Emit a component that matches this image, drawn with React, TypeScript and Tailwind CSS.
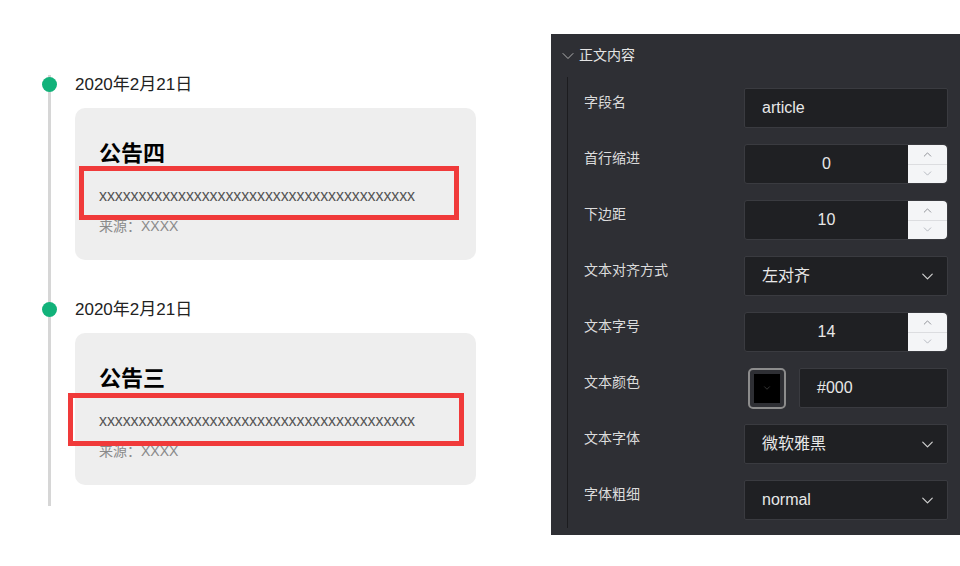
import { ChevronDown, ChevronUp } from "lucide-react";

const FONT = "font-['Liberation_Sans','Noto_Sans_CJK_SC',sans-serif]";

const XS = "x".repeat(40);

interface NoticeProps {
  title: string;
  box: string;
}

function Notice({ title, box }: NoticeProps) {
  return (
    <div className="relative mb-[40px] last:mb-0">
      {/* timeline dot */}
      <div className="absolute -left-[9px] top-[2px] h-[15px] w-[15px] rounded-full bg-[#12b27a]" />
      <div className="pl-[24px]">
        <div className="h-[20px] text-[17px] leading-[20px] text-[#222]">2020年2月21日</div>
        <div className="relative mt-[13px] h-[152px] w-[401px] rounded-[10px] bg-[#eeeeee] pl-[24px] pt-[31px]">
          <div className="text-[22px] font-bold leading-[30px] text-black">{title}</div>
          <div className="mt-[16px] text-[16px] leading-[22px] tracking-[-0.1px] text-[#555]">{XS}</div>
          <div className="mt-[9px] text-[14px] leading-[20px] text-[#8a8a8a]">来源：XXXX</div>
          {/* annotation box */}
          <div className={`absolute border-[5px] border-[#f03a3a] ${box}`} />
        </div>
      </div>
    </div>
  );
}

function Stepper() {
  return (
    <div className="flex w-[39px] flex-col rounded-r-[4px] bg-[#f4f5f7]">
      <div className="flex flex-1 items-center justify-center border-b border-[#dcdde0]">
        <ChevronUp size={13} strokeWidth={1.5} className="text-[#7d7f85]" />
      </div>
      <div className="flex flex-1 items-center justify-center">
        <ChevronDown size={13} strokeWidth={1.5} className="text-[#a9adb5]" />
      </div>
    </div>
  );
}

function TextBox({ value }: { value: string }) {
  return (
    <div className="flex h-[40px] w-[204px] items-center rounded-[2px] border border-[#3a3b40] bg-[#1f2023] pl-[17px] text-[16px] text-[#e8e8e8]">
      {value}
    </div>
  );
}

function NumberBox({ value }: { value: string }) {
  return (
    <div className="flex h-[40px] w-[204px] rounded-[3px] border border-[#3a3b40] bg-[#1f2023]">
      <div className="flex flex-1 items-center justify-center text-[16px] text-[#e8e8e8]">{value}</div>
      <Stepper />
    </div>
  );
}

function SelectBox({ value }: { value: string }) {
  return (
    <div className="flex h-[40px] w-[204px] items-center justify-between rounded-[2px] border border-[#3a3b40] bg-[#1f2023] pl-[17px] pr-[10px] text-[16px] text-[#e8e8e8]">
      <span>{value}</span>
      <ChevronDown size={19} strokeWidth={1.5} className="text-[#d0d0d0]" />
    </div>
  );
}

function ColorBox() {
  return (
    <div className="flex h-[40px] w-[204px] items-center gap-[13px] pl-[4px]">
      <div className="flex h-[41px] w-[38px] items-center justify-center rounded-[5px] border-2 border-[#8c8c8c] p-[4px]">
        <div className="flex h-full w-full items-center justify-center bg-black">
          <ChevronDown size={10} strokeWidth={1.5} className="text-[#555]" />
        </div>
      </div>
      <div className="flex h-[40px] flex-1 items-center rounded-[2px] border border-[#3a3b40] bg-[#1f2023] pl-[17px] text-[16px] text-[#e8e8e8]">
        #000
      </div>
    </div>
  );
}

const rows: { label: string; control: React.ReactNode }[] = [
  { label: "字段名", control: <TextBox value="article" /> },
  { label: "首行缩进", control: <NumberBox value="0" /> },
  { label: "下边距", control: <NumberBox value="10" /> },
  { label: "文本对齐方式", control: <SelectBox value="左对齐" /> },
  { label: "文本字号", control: <NumberBox value="14" /> },
  { label: "文本颜色", control: <ColorBox /> },
  { label: "文本字体", control: <SelectBox value="微软雅黑" /> },
  { label: "字体粗细", control: <SelectBox value="normal" /> },
];

export default function App() {
  return (
    <div className={`flex h-[566px] w-[960px] bg-white ${FONT}`}>
      {/* Left: timeline preview */}
      <div className="w-[551px] pl-[48px] pt-[77px]">
        <div className="h-[431px] border-l-[3px] border-[#d6d6d6]">
          <div className="-mt-[2px]">
            <Notice title="公告四" box="left-[4px] top-[58px] h-[54px] w-[380px]" />
            <Notice title="公告三" box="-left-[7px] top-[60px] h-[53px] w-[396px]" />
          </div>
        </div>
      </div>

      {/* Right: property panel */}
      <div className="mt-[34px] flex h-[501px] flex-1 flex-col bg-[#2e2f34]">
        <div className="flex h-[43px] items-center pl-[7px]">
          <ChevronDown size={20} strokeWidth={1.1} className="text-[#bbbbbb]" />
          <span className="ml-[1px] text-[14px] text-[#e4e4e4]">正文内容</span>
        </div>
        <div className="ml-[16px] flex flex-col gap-[16px] border-l border-[#1c1c1f] pb-[8px] pl-[16px] pt-[11px]">
          {rows.map((r) => (
            <div key={r.label} className="flex h-[40px]">
              <div className="w-[160px] pt-[4px] text-[14px] leading-[20px] text-[#dcdcdc]">{r.label}</div>
              {r.control}
            </div>
          ))}
        </div>
      </div>
    </div>
  );
}
